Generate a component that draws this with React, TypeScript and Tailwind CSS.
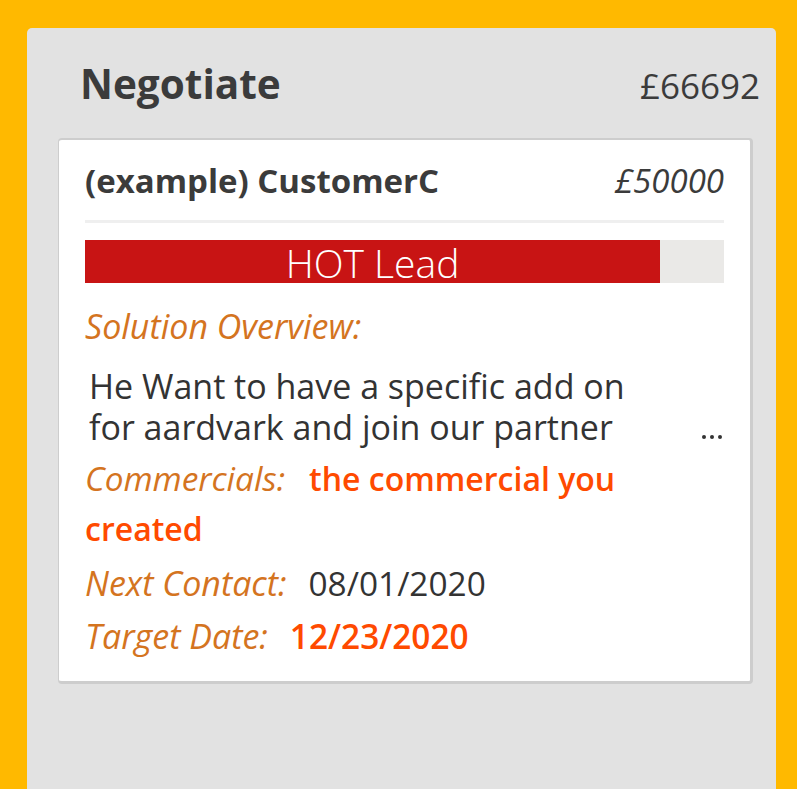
import React from "react";

export default function App() {
  const font = { fontFamily: '"Open Sans", "Noto Sans", sans-serif' };
  return (
    <div className="w-[797px] h-[789px] bg-[#FFB900] overflow-hidden" style={font}>
      <div className="ml-[27px] mt-[28px] w-[749px] h-[761px] bg-[#E2E2E2] rounded-t-[5px]">
        <div className="flex items-baseline justify-between pl-[53px] pr-[16px] h-[110px] pt-[31px]">
          <div className="text-[40.5px] font-bold text-[#3B3B3B] leading-[50px]">Negotiate</div>
          <div className="text-[35px] text-[#3B3B3B] leading-[50px]">£66692</div>
        </div>
        <div className="ml-[31px] w-[695px] bg-white rounded-[4px] border-t-2 border-l border-r-[3px] border-b-[3px] border-[#CDCDCD] pl-[26px] pr-[26px] pt-[17px] pb-[20px]">
          <div className="flex items-baseline justify-between h-[66px] border-b-[3px] border-[#EFEFEF]">
            <div className="text-[33px] font-bold text-[#3B3B3B] leading-[48px]">(example) CustomerC</div>
            <div className="text-[33px] italic text-[#3B3B3B] leading-[48px]">£50000</div>
          </div>
          <div className="mt-[17px] flex h-[43px] bg-[#EAE9E7]">
            <div className="w-[575px] h-[43px] pt-[3px] bg-[#C81414] flex justify-center text-white text-[39px] leading-[40px] font-[350]">
              HOT Lead
            </div>
          </div>
          <div className="mt-[23px] text-[34px] italic text-[#D4741F] leading-[40px]">Solution Overview:</div>
          <div className="mt-[20px] flex items-end justify-between">
            <div className="w-[560px] pl-[4px] text-[34px] text-[#333333] leading-[41px]">
              He Want to have a specific add on for aardvark and join our partner
            </div>
            <div className="flex gap-[3.5px] mr-[2px] mb-[9px]">
              <div className="w-[4.5px] h-[4.5px] rounded-full bg-[#333333]" />
              <div className="w-[4.5px] h-[4.5px] rounded-full bg-[#333333]" />
              <div className="w-[4.5px] h-[4.5px] rounded-full bg-[#333333]" />
            </div>
          </div>
          <div className="mt-[5px] text-[32px] leading-[50px]">
            <span className="italic text-[#D4741F] text-[33.4px]">Commercials:</span>
            <span className="ml-[24px] font-semibold text-[#FF4A00]">the commercial you</span>
            <br />
            <span className="font-semibold text-[#FF4A00]">created</span>
          </div>
          <div className="mt-[4px] text-[34px] leading-[50px]">
            <span className="italic text-[#D4741F]">Next Contact:</span>
            <span className="ml-[22px] text-[#333333] text-[33.4px]">08/01/2020</span>
          </div>
          <div className="mt-[3px] text-[34px] leading-[50px]">
            <span className="italic text-[#D4741F]">Target Date:</span>
            <span className="ml-[22px] font-semibold text-[#FF4A00] text-[33.4px]">12/23/2020</span>
          </div>
        </div>
      </div>
    </div>
  );
}
